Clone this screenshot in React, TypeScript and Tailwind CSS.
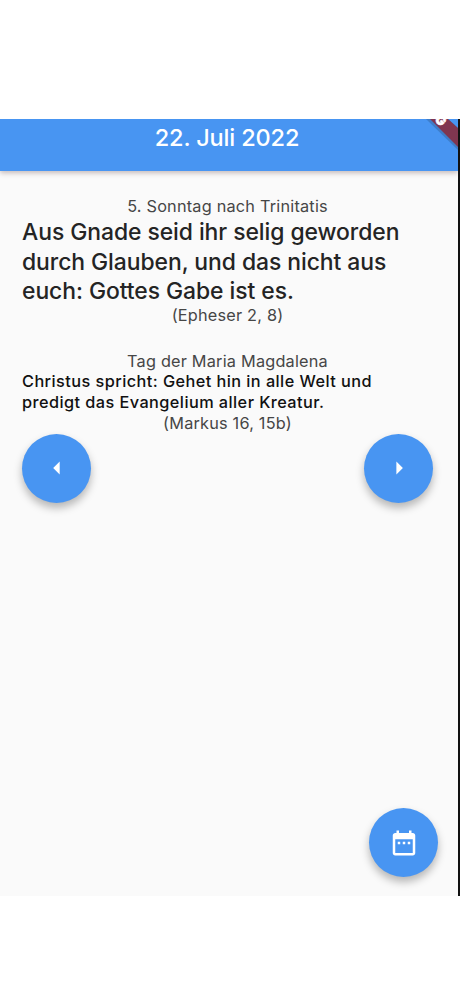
import type { ReactNode } from "react";

interface RoundButtonProps {
  label: string;
  children: ReactNode;
}

function RoundButton({ label, children }: RoundButtonProps) {
  return (
    <button
      aria-label={label}
      className="flex size-[69px] shrink-0 items-center justify-center rounded-full bg-[#4895f2] text-white shadow-[0_5px_9px_rgba(0,0,0,0.28)]"
    >
      {children}
    </button>
  );
}

function DebugRibbon() {
  return (
    <svg
      className="absolute top-0 right-0 h-[32px] w-[34px]"
      viewBox="0 0 34 32"
      aria-hidden="true"
    >
      <path d="M2 0H24L34 9V31Z" fill="#34659f" opacity="0.5" />
      <path d="M6 0H24L34 9V28Z" fill="#803650" />
      <text
        x="17"
        y="1"
        fill="#fff"
        stroke="#fff"
        strokeWidth="0.6"
        fontSize="13"
        fontWeight="900"
        fontFamily="Inter, sans-serif"
        textAnchor="middle"
        dominantBaseline="central"
        transform="rotate(45 17 1)"
      >
        G
      </text>
    </svg>
  );
}

function Caption({ children }: { children: ReactNode }) {
  return (
    <p className="text-center text-[16.3px] leading-[20px] tracking-[0.2px] text-[#464646]">
      {children}
    </p>
  );
}

export default function App() {
  return (
    <div className="h-[996px] w-[460px] overflow-hidden bg-white pt-[119px] font-['Inter',sans-serif]">
      <div className="flex h-[777px] w-full flex-col overflow-hidden border-r-2 border-[#111] bg-[#fafafa]">
        <header className="relative h-[52px] shrink-0 overflow-visible bg-[#4895f2] shadow-[0_2px_5px_rgba(60,20,20,0.28)]">
          <h1 className="pt-[3px] pr-[4px] text-center text-[23.5px] leading-[32px] font-medium tracking-[-0.15px] text-white">
            22. Juli 2022
          </h1>
          <DebugRibbon />
        </header>

        <main className="flex flex-1 flex-col pt-[25px] pr-[25px] pl-[22px]">
          <Caption>5. Sonntag nach Trinitatis</Caption>
          <p className="-mb-[2px] pt-[2px] text-[22.9px] leading-[29.6px] font-medium tracking-[-0.06px] whitespace-nowrap text-[#242424]">
            Aus Gnade seid ihr selig geworden
            <br />
            durch Glauben, und das nicht aus
            <br />
            euch: Gottes Gabe ist es.
          </p>
          <Caption>(Epheser 2, 8)</Caption>

          <div className="mt-[26px]">
            <Caption>Tag der Maria Magdalena</Caption>
            <p className="text-[16.3px] leading-[21px] font-medium tracking-[0.44px] whitespace-nowrap text-[#111]">
              Christus spricht: Gehet hin in alle Welt und
              <br />
              predigt das Evangelium aller Kreatur.
            </p>
            <Caption>(Markus 16, 15b)</Caption>
          </div>

          <div className="flex justify-between pt-px">
            <RoundButton label="Vorheriger Tag">
              <svg className="size-7" viewBox="0 0 28 28" fill="currentColor">
                <path d="M16.7 7.5V20.5L10.2 14Z" />
              </svg>
            </RoundButton>
            <RoundButton label="Nächster Tag">
              <svg className="size-7" viewBox="0 0 28 28" fill="currentColor">
                <path d="M11.4 7.5V20.5L17.9 14Z" />
              </svg>
            </RoundButton>
          </div>
        </main>

        <div className="flex justify-end pr-[20px] pb-[19px]">
          <RoundButton label="Datum wählen">
            <svg className="size-[30px]" viewBox="0 0 24 24" fill="currentColor">
              <path d="M9 11H7v2h2v-2zm4 0h-2v2h2v-2zm4 0h-2v2h2v-2zm2-7h-1V2h-2v2H8V2H6v2H5c-1.11 0-1.99.9-1.99 2L3 20c0 1.1.89 2 2 2h14c1.1 0 2-.9 2-2V6c0-1.1-.9-2-2-2zm0 16H5V9h14v11z" />
            </svg>
          </RoundButton>
        </div>
      </div>
    </div>
  );
}
